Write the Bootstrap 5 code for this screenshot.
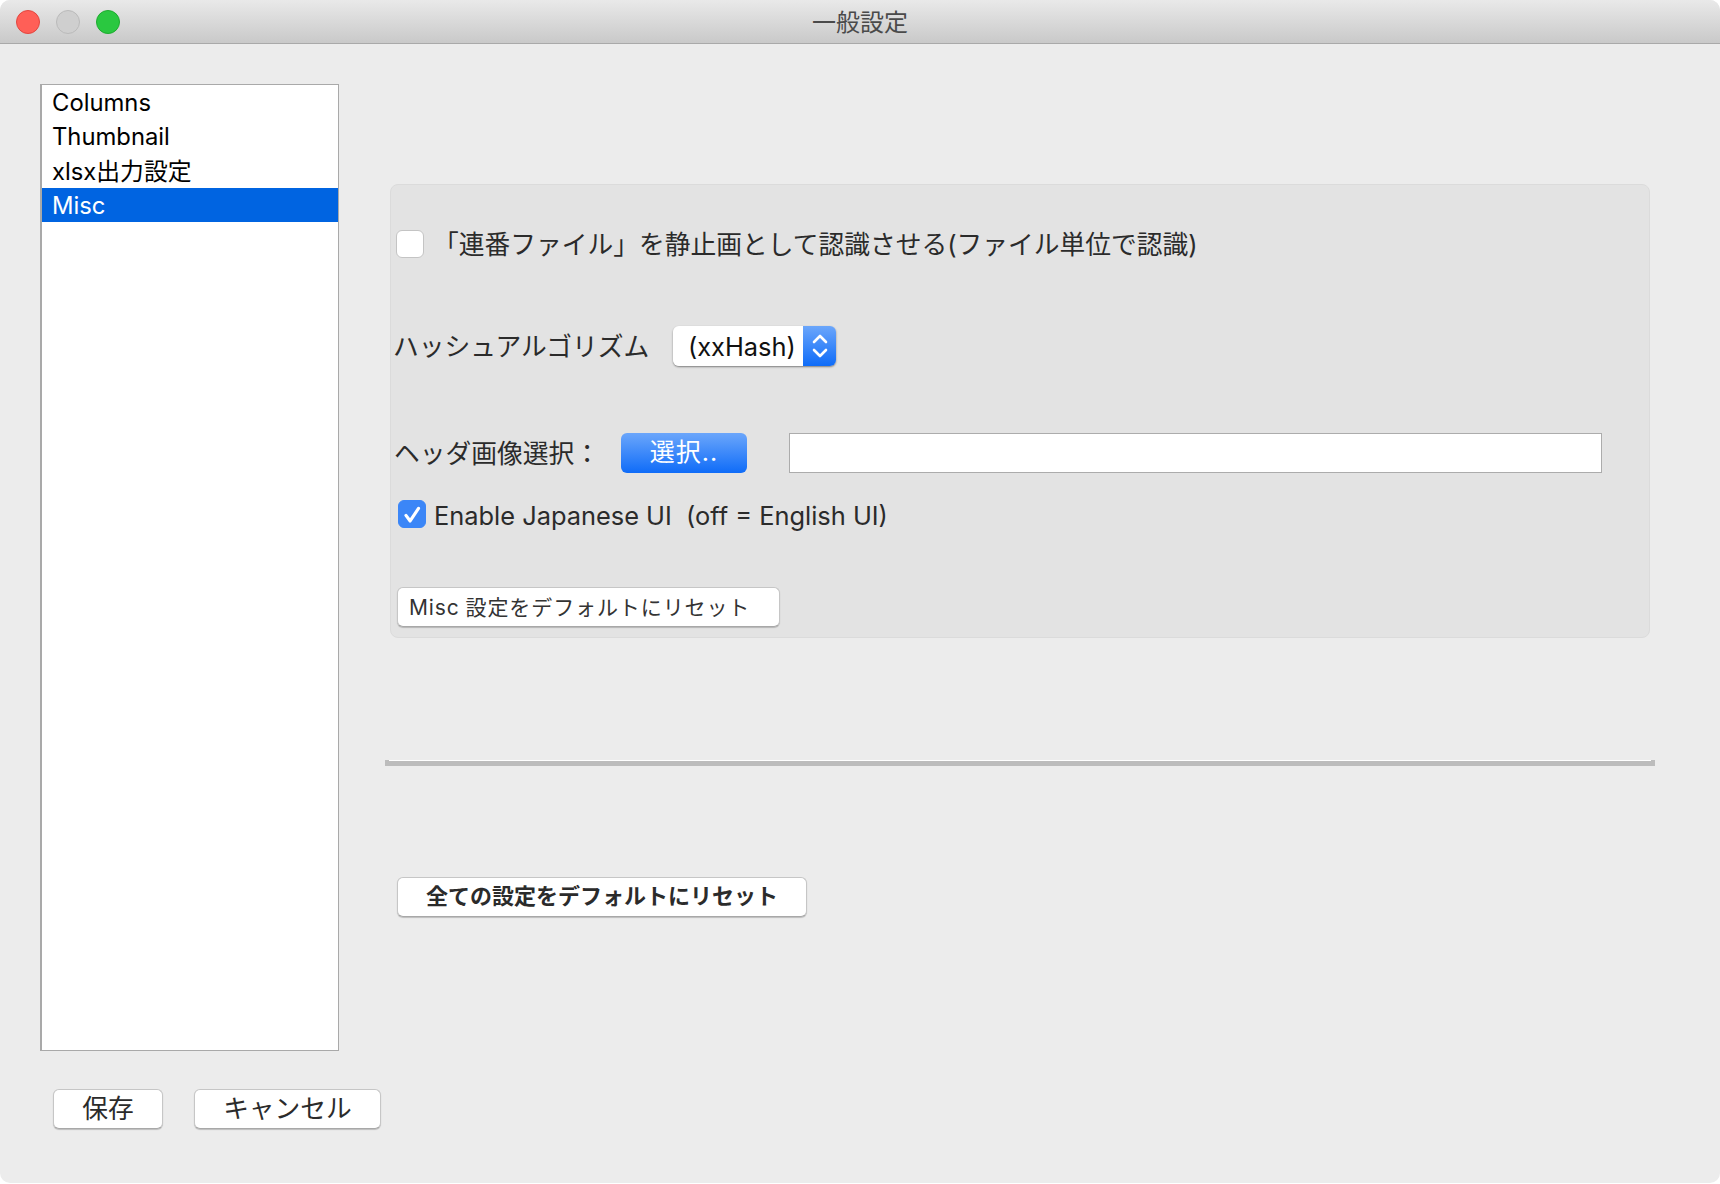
<!DOCTYPE html>
<html lang="ja">
<head>
  <meta charset="UTF-8">
  <title>一般設定</title>
  <link href="https://cdn.jsdelivr.net/npm/bootstrap@5.3.0/dist/css/bootstrap.min.css" rel="stylesheet">
  <style>
    body {
      background: #fff;
      font-family: Inter, "Noto Sans CJK JP", sans-serif;
      font-size: 25.75px;
      color: #2b2b2b;
    }
    .app-window {
      width: 1720px;
      height: 1183px;
      background: #ececec;
      border-radius: 10px;
      overflow: hidden;
    }
    .title-bar {
      height: 44px;
      background: linear-gradient(#e9e9e9, #c9c9c9);
      border-bottom: 1px solid #a9a9a9;
      padding: 0 16px;
    }
    .title-side { flex: 1 1 0; }
    .title-text { font-size: 24px; color: #4a4a4a; line-height: 1; padding-top: 3px; }
    .light {
      width: 24px;
      height: 24px;
      border-radius: 50%;
      border: 1px solid;
    }
    .light-red { background: #ff5f57; border-color: #e2463f; }
    .light-off { background: #cfcfcf; border-color: #bababa; }
    .light-green { background: #2ac840; border-color: #1eab2f; }

    .side-col { width: 340px; padding: 40px 0 0 40px; }
    .side-list {
      width: 299px;
      height: 967px;
      background: #fff;
      border: 1px solid #a9a9a9;
      border-left-width: 2px;
      padding-left: 0;
      margin: 0;
      list-style: none;
      color: #000;
    }
    .side-list li {
      height: 34.3px;
      line-height: 34.3px;
      padding: 1px 0 0 10px;
      font-size: 23.8px;
    }
    .side-list li.picked { background: #0064e1; color: #fff; }
    .side-btns { margin: 38px 0 0 13px; gap: 31px; }
    .side-btns .btn { flex: none; }

    .main-col { width: 1265px; margin-left: 50px; padding-top: 140px; }
    .group-panel {
      width: 1260px;
      height: 454px;
      background: #e3e3e3;
      border: 1px solid #dbdbdb;
      border-radius: 8px;
      padding: 45px 0 0 4px;
    }
    .form-check-input.mac-check {
      width: 28px;
      height: 28px;
      margin: 0;
      border: 1px solid #c4c4c4;
      border-radius: 6px;
      flex: none;
    }
    .form-check-input.mac-check:checked {
      background-color: #3b86f7;
      border-color: #3b86f7;
      background-image: url("data:image/svg+xml,%3csvg xmlns='http://www.w3.org/2000/svg' viewBox='0 0 28 28'%3e%3cpath fill='none' stroke='%23fff' stroke-width='3.4' stroke-linecap='round' stroke-linejoin='round' d='M7.5 15.5l4.5 6L21 8'/%3e%3c/svg%3e");
    }
    .check-row { height: 28px; margin-left: 1px; }
    .check-row label { margin-left: 9px; padding-top: 2px; white-space: pre; }
    .hash-row { height: 40px; margin-top: 68px; margin-left: -2px; }
    .hash-label { width: 280px; padding-top: 2px; }
    .hash-picker {
      width: 163px;
      height: 40px;
      border-radius: 6px;
      overflow: hidden;
      box-shadow: 0 1px 2px rgba(0, 0, 0, .45);
    }
    .hash-picker .form-select {
      flex: 1 1 0;
      min-width: 0;
      height: 40px;
      padding: 2px 0 0 15px;
      border: 0;
      border-radius: 0;
      background-image: none;
      font-size: 25.4px;
      color: #111;
    }
    .hash-arrows {
      width: 33px;
      background: linear-gradient(#6ba6fb, #0f6cf8);
    }
    .head-row { height: 40px; margin-top: 67px; margin-left: -1px; }
    .head-label { width: 227px; padding-top: 2px; }
    .btn.pick-btn {
      width: 126px;
      height: 40px;
      padding: 0;
      border: 0;
      border-radius: 6px;
      background: linear-gradient(#6ba6fb, #0f6cf8);
      color: #fff;
      font-size: 25px;
      letter-spacing: 1px;
    }
    .path-input {
      width: 813px;
      height: 40px;
      margin-left: 42px;
      padding: 0 6px;
      background: #fff;
      border: 1.5px solid #acacac;
      border-radius: 0;
    }
    .enable-row { margin-top: 27px; margin-left: 3px; height: 28px; font-size: 25.4px; }
    .enable-row label { margin-left: 8px; padding-top: 4px; white-space: pre; }
    .btn.mac-btn {
      height: 40px;
      padding: 0;
      background: #fff;
      border: 1px solid #c6c6c6;
      border-bottom-color: #a8a8a8;
      border-radius: 6px;
      box-shadow: 0 1px 1px rgba(0, 0, 0, .2);
      color: #2b2b2b;
      font-size: 25.75px;
      line-height: 1;
    }
    .misc-btn {
      display: block;
      width: 383px;
      margin: 59px 0 0 2px;
      text-align: left;
    }
    .btn.misc-btn {
      padding-left: 11px;
      font-size: 21px;
      letter-spacing: .9px;
      word-spacing: -1px;
      color: #333;
    }
    .btn.save-btn { width: 110px; }
    .btn.cancel-btn { width: 187px; }
    .split-line {
      width: 1270px;
      height: 6px;
      margin: 122px 0 0 -5px;
      background: linear-gradient(#fff, #fff) 4px 0 / 1262px 1px no-repeat, #bcbcbc;
    }
    .btn.all-btn {
      display: block;
      width: 410px;
      margin: 111px 0 0 7px;
      padding-bottom: 2px;
      font-size: 22px;
      font-weight: 700;
    }
  </style>
</head>
<body>

<div class="app-window">
  <div class="title-bar d-flex align-items-center">
    <div class="title-side d-flex gap-3">
      <span class="light light-red"></span>
      <span class="light light-off"></span>
      <span class="light light-green"></span>
    </div>
    <div class="title-text">一般設定</div>
    <div class="title-side"></div>
  </div>

  <div class="d-flex">
    <div class="side-col flex-shrink-0">
      <ul class="side-list">
        <li>Columns</li>
        <li>Thumbnail</li>
        <li>xlsx出力設定</li>
        <li class="picked">Misc</li>
      </ul>
      <div class="side-btns d-flex">
        <button class="btn mac-btn save-btn" type="button">保存</button>
        <button class="btn mac-btn cancel-btn" type="button">キャンセル</button>
      </div>
    </div>

    <div class="main-col">
      <div class="group-panel">
        <div class="check-row d-flex align-items-center">
          <input class="form-check-input mac-check" type="checkbox" id="seqStill">
          <label for="seqStill">「連番ファイル」を静止画として認識させる(ファイル単位で認識)</label>
        </div>

        <div class="hash-row d-flex align-items-center">
          <span class="hash-label">ハッシュアルゴリズム</span>
          <div class="hash-picker d-flex">
            <select class="form-select" aria-label="hash">
              <option selected>(xxHash)</option>
            </select>
            <span class="hash-arrows d-flex align-items-center justify-content-center">
              <svg width="18" height="32" viewBox="0 0 18 32" fill="none" stroke="#fff" stroke-width="2.6" stroke-linecap="round" stroke-linejoin="round">
                <path d="M3 12 9 6l6 6"/>
                <path d="M3 20l6 6 6-6"/>
              </svg>
            </span>
          </div>
        </div>

        <div class="head-row d-flex align-items-center">
          <span class="head-label">ヘッダ画像選択：</span>
          <button class="btn pick-btn" type="button">選択..</button>
          <input class="path-input" type="text" aria-label="header image">
        </div>

        <div class="enable-row d-flex align-items-center">
          <input class="form-check-input mac-check" type="checkbox" id="jpUi" checked>
          <label for="jpUi">Enable Japanese UI  (off = English UI)</label>
        </div>

        <button class="btn mac-btn misc-btn" type="button">Misc 設定をデフォルトにリセット</button>
      </div>

      <div class="split-line"></div>

      <button class="btn mac-btn all-btn" type="button">全ての設定をデフォルトにリセット</button>
    </div>
  </div>
</div>

<script src="https://cdn.jsdelivr.net/npm/bootstrap@5.3.0/dist/js/bootstrap.bundle.min.js"></script>
</body>
</html>
